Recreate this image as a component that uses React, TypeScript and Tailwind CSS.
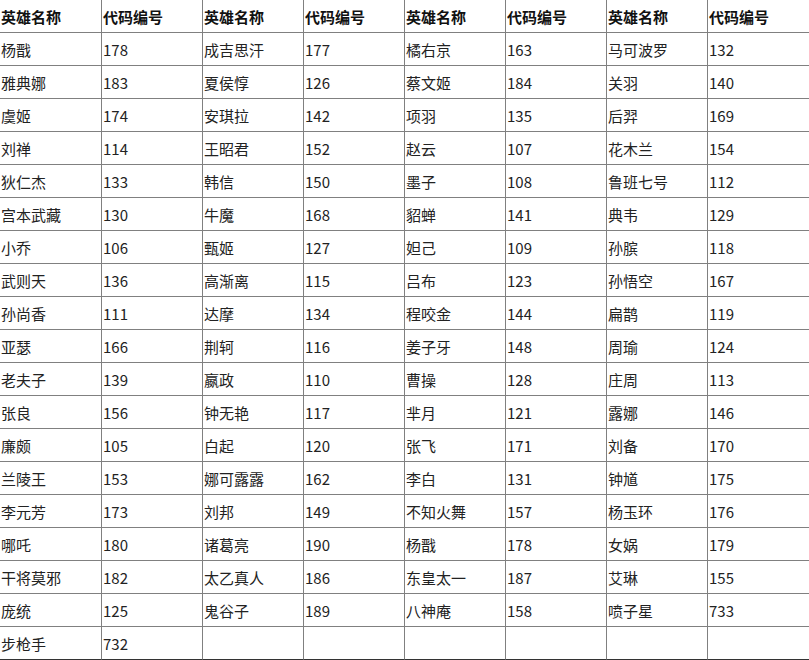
const HEROES: [string, number][][] = [
  [
    ["杨戬", 178], ["雅典娜", 183], ["虞姬", 174], ["刘禅", 114], ["狄仁杰", 133],
    ["宫本武藏", 130], ["小乔", 106], ["武则天", 136], ["孙尚香", 111], ["亚瑟", 166],
    ["老夫子", 139], ["张良", 156], ["廉颇", 105], ["兰陵王", 153], ["李元芳", 173],
    ["哪吒", 180], ["干将莫邪", 182], ["庞统", 125], ["步枪手", 732],
  ],
  [
    ["成吉思汗", 177], ["夏侯惇", 126], ["安琪拉", 142], ["王昭君", 152], ["韩信", 150],
    ["牛魔", 168], ["甄姬", 127], ["高渐离", 115], ["达摩", 134], ["荆轲", 116],
    ["嬴政", 110], ["钟无艳", 117], ["白起", 120], ["娜可露露", 162], ["刘邦", 149],
    ["诸葛亮", 190], ["太乙真人", 186], ["鬼谷子", 189],
  ],
  [
    ["橘右京", 163], ["蔡文姬", 184], ["项羽", 135], ["赵云", 107], ["墨子", 108],
    ["貂蝉", 141], ["妲己", 109], ["吕布", 123], ["程咬金", 144], ["姜子牙", 148],
    ["曹操", 128], ["芈月", 121], ["张飞", 171], ["李白", 131], ["不知火舞", 157],
    ["杨戬", 178], ["东皇太一", 187], ["八神庵", 158],
  ],
  [
    ["马可波罗", 132], ["关羽", 140], ["后羿", 169], ["花木兰", 154], ["鲁班七号", 112],
    ["典韦", 129], ["孙膑", 118], ["孙悟空", 167], ["扁鹊", 119], ["周瑜", 124],
    ["庄周", 113], ["露娜", 146], ["刘备", 170], ["钟馗", 175], ["杨玉环", 176],
    ["女娲", 179], ["艾琳", 155], ["喷子星", 733],
  ],
];

const ROWS = 19;

function Cell({ children, head, last }: { children?: React.ReactNode; head?: boolean; last?: boolean }) {
  return (
    <div
      className={
        "flex items-center pl-[1px] pt-[1px] border-r border-[#808080] " +
        (last ? "border-b border-b-[#333] " : "border-b ") +
        (head ? "h-[33px] font-bold text-[#111]" : "h-[33px] text-[#222]")
      }
    >
      {children}
    </div>
  );
}

export default function App() {
  const rows = Array.from({ length: ROWS }, (_, i) => i);
  return (
    <div
      className="w-[809px] h-[660px] overflow-hidden bg-white text-[15px] leading-none"
      style={{ fontFamily: '"Noto Sans CJK SC", "Noto Sans", sans-serif' }}
    >
      <div className="grid grid-cols-[102px_101px_101px_101px_101px_101px_101px_102px] w-[810px] -mt-[1px] border-t border-[#808080]">
        {HEROES.map((_, g) => (
          <div key={"h" + g} className="contents">
            <Cell head>英雄名称</Cell>
            <Cell head>代码编号</Cell>
          </div>
        ))}
        {rows.map((r) =>
          HEROES.map((col, g) => {
            const item = col[r];
            const last = r === ROWS - 1;
            return (
              <div key={r + "-" + g} className="contents">
                <Cell last={last}>{item ? item[0] : ""}</Cell>
                <Cell last={last}>{item ? item[1] : ""}</Cell>
              </div>
            );
          })
        )}
      </div>
    </div>
  );
}
